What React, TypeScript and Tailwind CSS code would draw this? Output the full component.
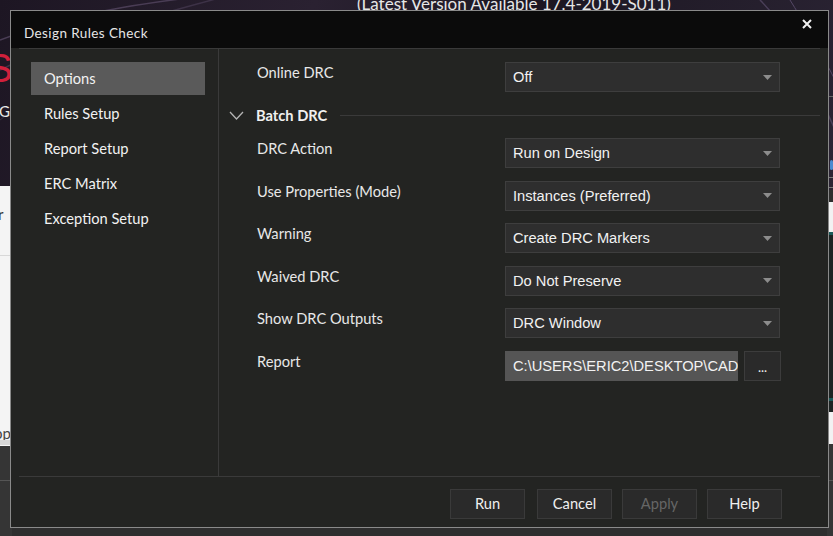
import React from "react";

const ui = "font-['Segoe_UI',Lato,'Open_Sans',sans-serif]";
const arial = "font-['Liberation_Sans',Arial,sans-serif]";

const navItems = ["Options", "Rules Setup", "Report Setup", "ERC Matrix", "Exception Setup"];

const batchRows = [
  { label: "DRC Action", value: "Run on Design" },
  { label: "Use Properties (Mode)", value: "Instances (Preferred)" },
  { label: "Warning", value: "Create DRC Markers" },
  { label: "Waived DRC", value: "Do Not Preserve" },
  { label: "Show DRC Outputs", value: "DRC Window" },
];

function Arrow() {
  return (
    <svg width="9" height="5" viewBox="0 0 9 5">
      <path d="M0 0h9L4.5 5z" fill="#8c8c8c" />
    </svg>
  );
}

function Dropdown({ value }: { value: string }) {
  return (
    <div className="flex h-[30px] w-[275px] items-center justify-between border border-[#3e3e3e] bg-[#2e2e2e] px-[7px]">
      <span className={`${arial} text-[14.67px] text-[#f2f2f2]`}>{value}</span>
      <Arrow />
    </div>
  );
}

function Row({ label, children }: { label: string; children: React.ReactNode }) {
  return (
    <div className="flex h-[30px] items-start">
      <div className="w-[286px] pl-[38px] pt-[1px] text-[14.67px] leading-[20px] text-[#e8e8e8]">{label}</div>
      {children}
    </div>
  );
}

function FooterButton({ label, disabled, className = "" }: { label: string; disabled?: boolean; className?: string }) {
  return (
    <button
      className={`flex h-[30px] w-[75px] items-center justify-center border border-[#3a3a3a] bg-[#2a2a2a] text-[14.67px] ${
        disabled ? "text-[#666666]" : "text-[#f0f0f0]"
      } ${className}`}
      type="button"
    >
      {label}
    </button>
  );
}

function Backdrop() {
  return (
    <>
      <div className="absolute left-0 top-0 h-[190px] w-full bg-[linear-gradient(110deg,#1d1623_0%,#2a2131_35%,#1c1722_60%,#2b2434_100%)]" />
      <svg className="absolute left-0 top-0" width="833" height="190" viewBox="0 0 833 190">
        <path d="M0 40 C 80 10, 160 0, 260 -10" stroke="#4a3d55" strokeWidth="1.5" fill="none" />
        <path d="M0 70 C 60 40, 140 20, 230 -5" stroke="#3d3247" strokeWidth="1.5" fill="none" />
        <path d="M0 120 C 40 90, 100 60, 200 30" stroke="#3a3044" strokeWidth="1" fill="none" />
        <path d="M760 0 C 800 40, 820 100, 840 140" stroke="#4a3f58" strokeWidth="1.5" fill="none" />
        <path d="M790 0 C 815 40, 830 70, 840 90" stroke="#554866" strokeWidth="1" fill="none" />
      </svg>
      <div className={`${ui} absolute left-[357px] top-[-9px] whitespace-nowrap text-[17px] text-[#e6e6e6]`}>
        (Latest Version Available 17.4-2019-S011)
      </div>
      <div className={`${arial} absolute left-[-14px] top-[48px] text-[40px] leading-[40px] text-[#d0203c]`}>S</div>
      <div className={`${ui} absolute left-[-1px] top-[102px] text-[15px] leading-[18px] text-[#e8e8e8]`}>G</div>
      <div className="absolute left-0 top-[186px] h-[260px] w-[12px] bg-[#f4f4f4]" />
      <div className="absolute left-0 top-[255px] h-[1px] w-[12px] bg-[#d8d8d8]" />
      <div className={`${ui} absolute left-[-2px] top-[205px] text-[15px] leading-[18px] text-[#333333]`}>r</div>
      <div className={`${ui} absolute left-[-6px] top-[424px] text-[15px] leading-[18px] text-[#444444]`}>op</div>
      <div className="absolute left-0 top-[440px] h-[5px] w-[12px] bg-[#d6d6d6]" />
      <div className="absolute left-0 top-[446px] h-[90px] w-[12px] bg-[#353535]" />
      <div className="absolute left-0 top-[480px] h-[1px] w-[12px] bg-[#555555]" />
      <div className="absolute right-0 top-[96px] h-[1px] w-[6px] bg-[#666666]" />
      <div className="absolute right-0 top-[160px] h-[10px] w-[3px] rounded-full bg-[#4a8ad0]" />
      <div className="absolute right-0 top-[177px] h-[1px] w-[6px] bg-[#777777]" />
      <div className="absolute right-0 top-[187px] h-[1px] w-[6px] bg-[#777777]" />
      <div className="absolute right-0 top-[202px] h-[30px] w-[6px] bg-[#f2f2f2]" />
      <div className="absolute right-0 top-[232px] h-[180px] w-[6px] bg-[#1e2424]" />
      <div className="absolute right-0 top-[232px] h-[3px] w-[6px] bg-[#1d5a5a]" />
      <div className="absolute right-0 top-[398px] h-[3px] w-[6px] bg-[#1d5a5a]" />
      <div className="absolute right-0 top-[412px] h-[32px] w-[6px] bg-[#f2f2f2]" />
      <div className="absolute right-0 top-[444px] h-[92px] w-[6px] bg-[#353535]" />
      <div className="absolute right-0 top-[480px] h-[1px] w-[6px] bg-[#555555]" />
    </>
  );
}

export default function App() {
  return (
    <div className={`${ui} relative h-[536px] w-[833px] overflow-hidden bg-[#2e2e2e]`}>
      <Backdrop />
      <div className="absolute left-[10px] top-[10px] flex h-[518px] w-[819px] flex-col border border-[#8a8a8a] bg-[#232422]">
        <div className="flex h-[37px] items-center justify-between bg-[#0b0b0b] pl-[13px] pr-[16px]">
          <span className="pt-[8px] text-[13.5px] tracking-[0.4px] text-[#e6e6e6]">Design Rules Check</span>
          <svg width="10" height="10" viewBox="0 0 10 10" className="-mt-[11px]">
            <path d="M1 1l8 8M9 1l-8 8" stroke="#f2f2f2" strokeWidth="2" />
          </svg>
        </div>
        <div className="mx-[8px] flex h-[428px] border-t border-[#3a3a3a]">
          <nav className="flex w-[200px] flex-col gap-[2px] border-r border-[#3a3a3a] pl-[12px] pt-[13px]">
            {navItems.map((item, i) => (
              <div
                className={`flex h-[33px] w-[174px] items-center pl-[13px] text-[14.67px] text-[#f2f2f2] ${
                  i === 0 ? "bg-[#5a5a5a]" : ""
                }`}
                key={item}
              >
                {item}
              </div>
            ))}
          </nav>
          <div className="flex flex-1 flex-col pt-[13px]">
            <Row label="Online DRC">
              <Dropdown value="Off" />
            </Row>
            <div className="flex h-[46px] items-center pl-[10px] pt-[1px]">
              <svg width="15" height="9" viewBox="0 0 15 9">
                <path d="M1 1l6.5 7L14 1" stroke="#b4b4b4" strokeWidth="1.3" fill="none" />
              </svg>
              <span className="ml-[12px] text-[14.67px] font-bold text-[#f0f0f0]">Batch DRC</span>
              <div className="ml-[13px] h-[1px] flex-1 bg-[#3a3a3a]" />
            </div>
            <div className="flex flex-col gap-[12.5px]">
              {batchRows.map((row) => (
                <Row key={row.label} label={row.label}>
                  <Dropdown value={row.value} />
                </Row>
              ))}
              <Row label="Report">
                <div className="flex gap-[6px]">
                  <div
                    className={`${arial} flex h-[30px] w-[233px] items-center overflow-hidden whitespace-nowrap bg-[#555555] pl-[8px] text-[14.67px] text-[#f2f2f2]`}
                  >
                    C:\USERS\ERIC2\DESKTOP\CADENCE\DRC.RPT
                  </div>
                  <button
                    className="flex h-[30px] w-[37px] items-end justify-center border border-[#3c3c3c] bg-[#2a2a2a] pb-[6px] text-[13px] leading-none text-[#f0f0f0]"
                    type="button"
                  >
                    ...
                  </button>
                </div>
              </Row>
            </div>
          </div>
        </div>
        <div className="mx-[8px] flex flex-1 justify-end gap-[10px] border-t border-[#3a3a3a] pr-[38px] pt-[12px]">
          <FooterButton className="mr-[2px]" label="Run" />
          <FooterButton label="Cancel" />
          <FooterButton disabled label="Apply" />
          <FooterButton label="Help" />
        </div>
      </div>
    </div>
  );
}
